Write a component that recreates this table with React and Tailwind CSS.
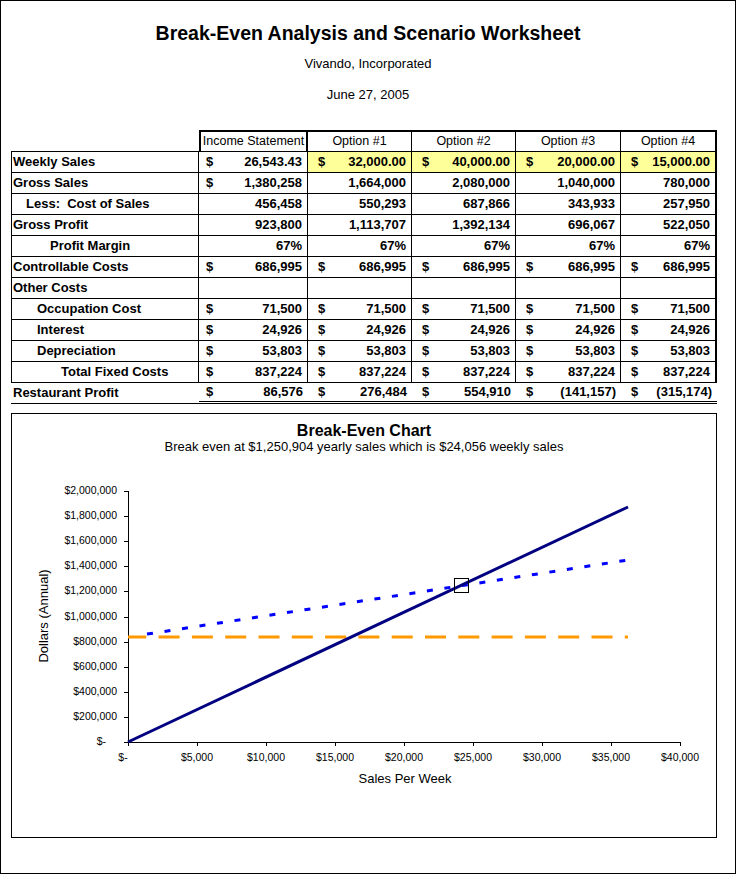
import React from 'react';

// Datos de la hoja (Income Statement + 4 opciones)
const filas = [
  { label: 'Weekly Sales', indent: 1, dollar: [1, 1, 1, 1, 1], vals: ['26,543.43', '32,000.00', '40,000.00', '20,000.00', '15,000.00'], amarillo: true },
  { label: 'Gross Sales', indent: 1, dollar: [1, 0, 0, 0, 0], vals: ['1,380,258', '1,664,000', '2,080,000', '1,040,000', '780,000'] },
  { label: 'Less:  Cost of Sales', indent: 14, dollar: [0, 0, 0, 0, 0], vals: ['456,458', '550,293', '687,866', '343,933', '257,950'] },
  { label: 'Gross Profit', indent: 1, dollar: [0, 0, 0, 0, 0], vals: ['923,800', '1,113,707', '1,392,134', '696,067', '522,050'] },
  { label: 'Profit Margin', indent: 38, dollar: [0, 0, 0, 0, 0], vals: ['67%', '67%', '67%', '67%', '67%'] },
  { label: 'Controllable Costs', indent: 1, dollar: [1, 1, 1, 1, 1], vals: ['686,995', '686,995', '686,995', '686,995', '686,995'] },
  { label: 'Other Costs', indent: 1, dollar: [0, 0, 0, 0, 0], vals: ['', '', '', '', ''] },
  { label: 'Occupation Cost', indent: 25, dollar: [1, 1, 1, 1, 1], vals: ['71,500', '71,500', '71,500', '71,500', '71,500'] },
  { label: 'Interest', indent: 25, dollar: [1, 1, 1, 1, 1], vals: ['24,926', '24,926', '24,926', '24,926', '24,926'] },
  { label: 'Depreciation', indent: 25, dollar: [1, 1, 1, 1, 1], vals: ['53,803', '53,803', '53,803', '53,803', '53,803'] },
  { label: 'Total Fixed Costs', indent: 49, dollar: [1, 1, 1, 1, 1], vals: ['837,224', '837,224', '837,224', '837,224', '837,224'] },
];

const utilidad = ['86,576', '276,484', '554,910', '(141,157)', '(315,174)'];
const cabeceras = ['Income Statement', 'Option #1', 'Option #2', 'Option #3', 'Option #4'];

const grid = 'grid grid-cols-[188px_109px_104px_104px_105px_96px]';

function Celda({ i, dollar, val, amarillo, ultima }) {
  const pl = i === 0 ? 'pl-[7px]' : 'pl-[10px]';
  let bordes = 'border-r border-b border-black';
  if (i === 4) bordes = 'border-r-2 border-b border-black';
  if (ultima) bordes = 'border-b-[3px] border-double border-black';
  return (
    <div className={`h-[21px] flex items-center justify-between ${pl} pr-[5px] ${bordes} ${amarillo && i > 0 ? 'bg-[#ffff99]' : ''}`}>
      <span>{dollar ? '$' : ''}</span>
      <span>{val}</span>
    </div>
  );
}

function Grafico() {
  // plano: 0 -> y 288, 2,000,000 -> y 37 ; x 0 -> 116, 40,000 -> 668
  const yLabels = ['$-', '$200,000', '$400,000', '$600,000', '$800,000', '$1,000,000', '$1,200,000', '$1,400,000', '$1,600,000', '$1,800,000', '$2,000,000'];
  const xLabels = ['$-', '$5,000', '$10,000', '$15,000', '$20,000', '$25,000', '$30,000', '$35,000', '$40,000'];
  return (
    <svg width="703" height="382" className="block" fontFamily="'Liberation Sans', Arial, sans-serif">
      {/* ejes */}
      <line x1="116.5" y1="37" x2="116.5" y2="288" stroke="#000" strokeWidth="1" />
      <line x1="116" y1="288.5" x2="668" y2="288.5" stroke="#000" strokeWidth="1" />
      {yLabels.map((t, i) => {
        const y = Math.round(288 - i * 25.1) + 0.5;
        return (
          <g key={t}>
            <line x1="112" y1={y} x2="116" y2={y} stroke="#000" />
            <text x={i === 0 ? 94 : 105} y={y} fontSize="10.5" textAnchor="end" dominantBaseline="middle">{t}</text>
          </g>
        );
      })}
      {xLabels.map((t, i) => {
        const x = 116 + i * 69;
        return (
          <g key={t}>
            <line x1={x + 0.5} y1="288" x2={x + 0.5} y2="292" stroke="#000" />
            <text x={i === 0 ? x - 5 : x} y="304" fontSize="10.5" textAnchor="middle" dominantBaseline="middle">{t}</text>
          </g>
        );
      })}
      <text x="393" y="326" fontSize="13" textAnchor="middle" dominantBaseline="middle">Sales Per Week</text>
      <text x="33" y="162" fontSize="13" textAnchor="middle" dominantBaseline="middle" transform="rotate(-90 33 162)">Dollars (Annual)</text>

      {/* costos fijos */}
      <line x1="116" y1="183" x2="616" y2="183" stroke="#ff9900" strokeWidth="3" strokeDasharray="21 12.3" strokeDashoffset="2.7" />
      {/* costos totales */}
      <line x1="135" y1="180.1" x2="616" y2="106" stroke="#0000ff" strokeWidth="3" strokeDasharray="6 11.7" />
      {/* ventas */}
      <line x1="116" y1="288" x2="616" y2="53" stroke="#000080" strokeWidth="3" />
      {/* punto de equilibrio */}
      <rect x="442.5" y="124.5" width="14" height="14" fill="none" stroke="#000" strokeWidth="1" />
    </svg>
  );
}

export default function App() {
  return (
    <div className="w-[736px] h-[874px] border border-black bg-white text-black font-['Liberation_Sans',Arial,sans-serif]">
      {/* Encabezado */}
      <div className="pt-[21px] text-center">
        <h1 className="h-[23px] leading-[23px] text-[19.5px] font-bold">Break-Even Analysis and Scenario Worksheet</h1>
        <p className="mt-[11px] h-[16px] leading-[16px] text-[13px]">Vivando, Incorporated</p>
        <p className="mt-[15px] h-[16px] leading-[16px] text-[13px]">June 27, 2005</p>
      </div>

      {/* Tabla */}
      <div className="mt-[27px] ml-[10px] w-[706px] text-[13px] font-bold">
        <div className={`${grid} h-[22px] font-normal text-[12.5px]`}>
          <div className="border-b border-black" />
          {cabeceras.map((c, i) => (
            <div
              key={c}
              className={`flex items-center justify-center border-t-2 border-b border-black ${i === 0 ? 'border-l-2 border-r-2' : i === 4 ? 'border-r-2' : 'border-r'}`}
            >
              {c}
            </div>
          ))}
        </div>
        {filas.map((f) => (
          <div key={f.label} className={grid}>
            <div className="h-[21px] flex items-center border-l border-r border-b border-black whitespace-pre" style={{ paddingLeft: f.indent }}>
              {f.label}
            </div>
            {f.vals.map((v, i) => (
              <Celda key={i} i={i} dollar={f.dollar[i]} val={v} amarillo={f.amarillo} />
            ))}
          </div>
        ))}
        <div className={grid}>
          <div className="h-[21px] flex items-center pl-[2px] border-b border-black">Restaurant Profit</div>
          {utilidad.map((v, i) => (
            <Celda key={i} i={i} dollar val={v} ultima />
          ))}
        </div>
      </div>

      {/* Grafico */}
      <div className="mt-[9px] ml-[10px] w-[706px] h-[425px] border border-black">
        <div className="mt-[8px] h-[18px] leading-[18px] text-center text-[16px] font-bold">Break-Even Chart</div>
        <div className="h-[14px] leading-[14px] text-center text-[13px]">Break even at $1,250,904 yearly sales which is $24,056 weekly sales</div>
        <Grafico />
      </div>
    </div>
  );
}
